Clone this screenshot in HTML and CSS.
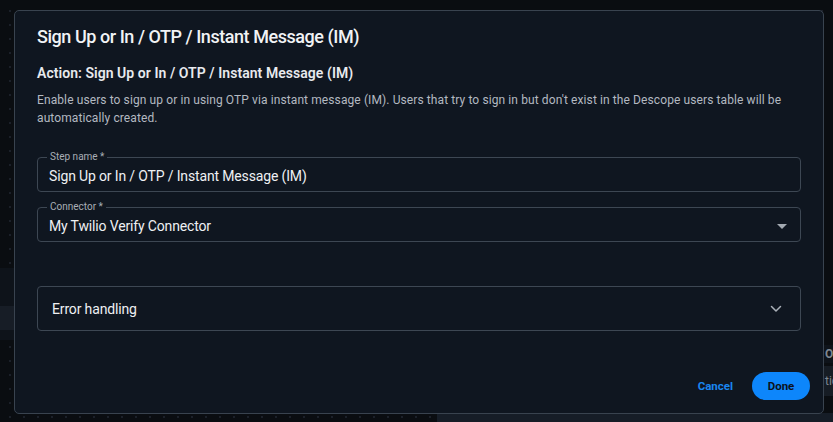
FILE: index.html
```html
<!DOCTYPE html>
<html lang="en">
<head>
<meta charset="utf-8">
<title>Sign Up or In / OTP / Instant Message (IM)</title>
<link rel="stylesheet" href="styles.css">
</head>
<body>
<div class="canvas">
  <div class="bg-strip bg-left"></div>
  <div class="bg-strip bg-left-row"></div>
  <div class="bg-strip bg-right-text">OTP</div>
  <div class="bg-strip bg-right-row">tic</div>
  <div class="bg-strip bg-bottom"></div>

  <div class="modal" role="dialog">
    <div class="modal-body">
      <h1 class="title">Sign Up or In / OTP / Instant Message (IM)</h1>
      <h2 class="action">Action: Sign Up or In / OTP / Instant Message (IM)</h2>
      <p class="desc">Enable users to sign up or in using OTP via instant message (IM). Users that try to sign in but don't exist in the Descope users table will be automatically created.</p>

      <fieldset class="field">
        <legend>Step name *</legend>
        <div class="value">Sign Up or In / OTP / Instant Message (IM)</div>
      </fieldset>

      <fieldset class="field">
        <legend>Connector *</legend>
        <div class="value select">
          <span>My Twilio Verify Connector</span>
          <svg class="caret" width="10" height="5" viewBox="0 0 10 5"><path d="M0 0h10L5 5z" fill="#a3a9b1"/></svg>
        </div>
      </fieldset>

      <div class="accordion">
        <span>Error handling</span>
        <svg class="chev" width="12" height="8" viewBox="0 0 12 8"><path d="M1.5 1.5L6 6l4.5-4.5" fill="none" stroke="#aab0b8" stroke-width="1.5" stroke-linecap="round" stroke-linejoin="round"/></svg>
      </div>
    </div>

    <div class="modal-footer">
      <button class="btn-text">Cancel</button>
      <button class="btn-primary">Done</button>
    </div>
  </div>
</div>
</body>
</html>
```

FILE: styles.css
```css
* { box-sizing: border-box; }

html, body {
  margin: 0;
  padding: 0;
  width: 833px;
  height: 422px;
  overflow: hidden;
  background: #0a0d11;
  font-family: "Roboto", "Liberation Sans", sans-serif;
}

.canvas {
  position: relative;
  width: 833px;
  height: 422px;
  padding: 10px 10px 0 14px;
  background-color: #0a0d11;
  background-image: radial-gradient(circle, #1b2029 0.8px, transparent 1px);
  background-size: 14px 14px;
  background-position: 3px 4px;
}

.bg-strip {
  position: absolute;
  overflow: hidden;
  white-space: nowrap;
  color: #7f8791;
  font-size: 12px;
  font-weight: 700;
}
.bg-left { left: 0; top: 268px; width: 20px; height: 72px; background: #0e131a; }
.bg-left-row { left: 0; top: 306px; width: 20px; height: 24px; background: #171d26; }
.bg-right-text { left: 823px; top: 345px; width: 10px; height: 18px; line-height: 18px; padding-left: 2px; background: #0e131a; }
.bg-right-row { left: 823px; top: 366px; width: 10px; height: 30px; line-height: 30px; padding-left: 2px; background: #161c24; font-weight: 400; }
.bg-bottom { left: 437px; top: 413px; width: 396px; height: 9px; background: #161d27; }

.modal {
  position: relative;
  width: 810px;
  height: 404px;
  background: #0f1620;
  border: 1px solid #39434f;
  border-radius: 5px;
  display: flex;
  flex-direction: column;
}

.modal-body {
  padding: 14px 22px 0 22px;
  display: flex;
  flex-direction: column;
}

.title {
  margin: 0;
  font-size: 18px;
  line-height: 24px;
  font-weight: 500;
  color: #f1f3f5;
  letter-spacing: -0.45px;
}

.action {
  margin: 14px 0 0;
  font-size: 14px;
  line-height: 20px;
  font-weight: 600;
  color: #e8eaee;
  letter-spacing: 0.05px;
}

.desc {
  margin: 8px 0 0;
  font-size: 12px;
  line-height: 18px;
  color: #b3b9c1;
  letter-spacing: 0.1px;
}

.field {
  margin: 24px 0 0;
  padding: 0 11px 0 11px;
  border: 1px solid #3d4753;
  border-radius: 4px;
  min-width: 0;
  height: 41px;
}
.field + .field { margin-top: 9px; }

.field legend {
  padding: 0 3px;
  margin-left: -2px;
  font-size: 10px;
  line-height: 12px;
  color: #a8aeb6;
}

.value {
  height: 28px;
  display: flex;
  align-items: center;
  font-size: 14px;
  color: #eef0f3;
  letter-spacing: -0.15px;
  padding-bottom: 2px;
}

.select { justify-content: space-between; padding-right: 2px; }

.accordion {
  margin-top: 44px;
  height: 45px;
  border: 1px solid #3d4753;
  border-radius: 4px;
  padding: 0 18px 0 14px;
  display: flex;
  align-items: center;
  justify-content: space-between;
  font-size: 14px;
  color: #eef0f3;
  letter-spacing: -0.15px;
}

.modal-footer {
  margin-top: auto;
  padding: 0 13px 13px 0;
  display: flex;
  justify-content: flex-end;
  align-items: center;
  gap: 19px;
}

.btn-text {
  background: none;
  border: 0;
  padding: 0;
  font-family: inherit;
  font-size: 11.5px;
  font-weight: 700;
  color: #1a86f0;
  cursor: pointer;
}

.btn-primary {
  width: 58px;
  height: 28px;
  border: 0;
  border-radius: 14px;
  background: #0d86fb;
  color: #0c121a;
  font-family: inherit;
  font-size: 11.5px;
  font-weight: 700;
  cursor: pointer;
}
```
